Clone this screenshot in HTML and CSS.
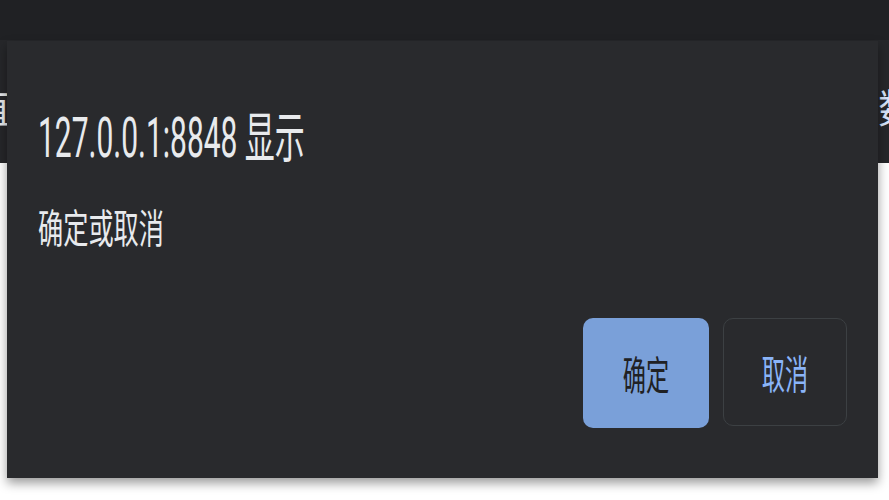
FILE: index.html
```html
<!DOCTYPE html>
<html lang="zh-CN">
<head>
<meta charset="utf-8">
<title>127.0.0.1:8848 显示</title>
<link rel="stylesheet" href="styles.css">
</head>
<body>
<div class="page">
  <div class="topbar"></div>
  <div class="nav">
    <span class="nav-left">值</span>
    <span class="nav-right">数</span>
  </div>
  <div class="content"></div>
</div>
<div class="dialog" role="dialog">
  <div class="title"><span class="sx sx-title">127.0.0.1:8848 显示</span></div>
  <div class="message"><span class="sx sx-msg">确定或取消</span></div>
  <div class="spacer"></div>
  <div class="actions">
    <button class="btn btn-ok"><span class="sx sx-btn">确定</span></button>
    <button class="btn btn-cancel"><span class="sx sx-btn">取消</span></button>
  </div>
</div>
</body>
</html>
```
FILE: styles.css
```css
html, body {
  margin: 0;
  padding: 0;
  background: #ffffff;
  overflow: hidden;
}
body {
  width: 889px;
  height: 500px;
  font-family: Roboto, "Noto Sans CJK SC", sans-serif;
}
.page {
  display: flex;
  flex-direction: column;
  height: 500px;
}
.topbar {
  height: 40px;
  background: #202124;
}
.nav {
  height: 123px;
  background: #26272a;
  display: flex;
  justify-content: space-between;
  align-items: flex-start;
  overflow: hidden;
  color: #e8eaed;
  font-family: "Noto Sans CJK SC", sans-serif;
  font-size: 40px;
  line-height: 40px;
  padding-top: 46px;
  box-sizing: border-box;
}
.nav-left {
  margin-left: -30px;
}
.nav-right {
  margin-right: -29px;
  color: #d6e4fb;
}
.content {
  flex: 1;
  background: #ffffff;
}
.dialog {
  position: absolute;
  left: 7px;
  top: 41px;
  width: 871px;
  height: 437px;
  background: #292a2d;
  box-shadow: 0 5px 10px rgba(0, 0, 0, 0.4);
  display: flex;
  flex-direction: column;
  padding: 70px 31px 50px 31px;
  box-sizing: border-box;
  color: #e8eaed;
}
.sx {
  display: inline-block;
  white-space: nowrap;
  transform-origin: left center;
}
.title {
  font-size: 55px;
  line-height: 55px;
  height: 55px;
}
.sx-title {
  transform: scaleX(0.545);
}
.message {
  margin-top: 40px;
  font-family: "Noto Sans CJK SC", sans-serif;
  font-size: 40px;
  line-height: 40px;
}
.sx-msg {
  transform: scaleX(0.63);
}
.spacer {
  flex: 1;
}
.actions {
  display: flex;
  justify-content: flex-end;
  gap: 14px;
}
.btn {
  width: 126px;
  height: 110px;
  border-radius: 10px;
  font-family: "Noto Sans CJK SC", sans-serif;
  font-size: 40px;
  line-height: 40px;
  padding: 0;
  display: flex;
  align-items: center;
  justify-content: center;
  box-sizing: border-box;
}
.sx-btn {
  transform: scaleX(0.58);
  transform-origin: center center;
}
.btn-ok {
  background: #7aa0d9;
  color: #202124;
  border: none;
}
.btn-cancel {
  width: 124px;
  height: 108px;
  background: #292a2d;
  color: #8ab4f8;
  border: 1px solid #3c4043;
}
```
